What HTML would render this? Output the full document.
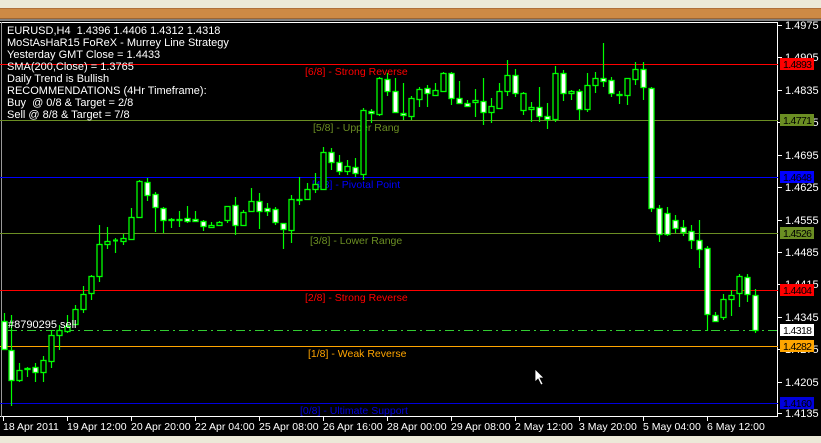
<!DOCTYPE html>
<html><head><meta charset="utf-8"><style>
html,body{margin:0;padding:0;width:821px;height:443px;overflow:hidden;background:#000;font-family:"Liberation Sans",sans-serif;}
#top{position:absolute;left:0;top:0;width:821px;height:8px;background:#ece9d8;}
#bar{position:absolute;left:0;top:8px;width:821px;height:9px;background:#cd8a45;border-top:1px solid #b0703a;border-bottom:1px solid #9a6535;}
#bar2{position:absolute;left:0;top:19px;width:821px;height:2px;background:#808080;}
#bot{position:absolute;left:0;top:436px;width:821px;height:7px;background:#ece9d8;}
.info{position:absolute;left:7px;color:#fff;font-size:11px;line-height:12px;white-space:pre;}
svg{position:absolute;left:0;top:0;}
</style></head><body>
<div id="top"></div><div id="bar"></div><div id="bar2"></div>
<svg id="s" width="821" height="443" xmlns="http://www.w3.org/2000/svg" font-family="Liberation Sans, sans-serif">
<rect x="0" y="21" width="821" height="415" fill="#000"/>
<line x1="0" y1="22.5" x2="778" y2="22.5" stroke="#fff"/>
<line x1="777.5" y1="22" x2="777.5" y2="417" stroke="#fff"/>
<line x1="0" y1="416.5" x2="778" y2="416.5" stroke="#fff"/>
<line x1="1.5" y1="22" x2="1.5" y2="417" stroke="#999"/>
<g id="lv"></g>
<g id="cd"></g>
<g id="ax"></g>
</svg>
<div class="info" style="top:25px">EURUSD,H4  1.4396 1.4406 1.4312 1.4318
MoStAsHaR15 FoReX - Murrey Line Strategy
Yesterday GMT Close = 1.4433
SMA(200,Close) = 1.3765
Daily Trend is Bullish
RECOMMENDATIONS (4Hr Timeframe):
Buy  @ 0/8 &amp; Target = 2/8
Sell @ 8/8 &amp; Target = 7/8</div>
<div id="bot"></div>
<script>
var NS="http://www.w3.org/2000/svg";
function el(p,t,a,txt){var e=document.createElementNS(NS,t);for(var k in a)e.setAttribute(k,a[k]);if(txt)e.textContent=txt;document.getElementById(p).appendChild(e);return e;}
var lv=[[64,"#ff0000","[6/8] - Strong Reverse",305,"1.4893"],[120,"#6b8e23","[5/8] - Upper Rang",313,"1.4771"],[177,"#0000ff","[4/8] - Pivotal Point",312,"1.4648"],[233,"#6b8e23","[3/8] - Lower Range",310,"1.4526"],[290,"#ff0000","[2/8] - Strong Reverse",305,"1.4404"],[346,"#ffa500","[1/8] - Weak Reverse",308,"1.4282"],[403,"#0000dd","[0/8] - Ultimate Support",300,"1.4160"]];
var pl=[[25,"1.4975"],[57,"1.4905"],[90,"1.4835"],[122,"1.4765"],[155,"1.4695"],[187,"1.4625"],[220,"1.4555"],[252,"1.4485"],[284,"1.4415"],[317,"1.4345"],[349,"1.4275"],[382,"1.4205"],[413,"1.4135"]];
pl.forEach(function(p){el("ax","line",{x1:778,y1:p[0]+.5,x2:782,y2:p[0]+.5,stroke:"#fff"});el("ax","text",{x:785,y:p[0]+4,fill:"#fff","font-size":"11"},p[1]);});
lv.forEach(function(l){var c=l[1];el("lv","line",{x1:0,y1:l[0]+.5,x2:778,y2:l[0]+.5,stroke:c});
el("lv","text",{x:l[3],y:l[0]+11,fill:c,"font-size":"10.5"},l[2]);
el("ax","rect",{x:780,y:l[0]-6,width:34,height:12,fill:c});
el("ax","text",{x:783,y:l[0]+4,fill:"#000","font-size":"10.5",textLength:"29"},l[4]);});
el("lv","line",{x1:8,y1:330.5,x2:778,y2:330.5,stroke:"#32cd32","stroke-dasharray":"9,4,2,4"});
el("ax","rect",{x:780,y:324,width:34,height:12,fill:"#fff"});
el("ax","text",{x:783,y:334,fill:"#000","font-size":"10.5",textLength:"29"},"1.4318");
el("ax","text",{x:8,y:328,fill:"#fff","font-size":"11"},"#8790295 sell");
var tl=["18 Apr 2011","19 Apr 12:00","20 Apr 20:00","22 Apr 04:00","25 Apr 08:00","26 Apr 16:00","28 Apr 00:00","29 Apr 08:00","2 May 12:00","3 May 20:00","5 May 04:00","6 May 12:00"];
tl.forEach(function(t,i){var x=3+64*i;el("ax","line",{x1:x+.5,y1:417,x2:x+.5,y2:421,stroke:"#fff"});el("ax","text",{x:x,y:430,fill:"#fff","font-size":"10.5"},t);});
var C=[[4,321,349,313,350,1],[11,350,380,315,406,1],[19,370,380,363,382,0],[27,368,369,367,377,0],[35,367,372,363,382,1],[43,360,372,356,382,0],[51,335,361,330,368,0],[59,330,335,325,350,0],[67,326,331,315,333,0],[75,309,324,305,324,0],[83,294,309,286,313,0],[91,276,293,275,300,0],[99,244,276,225,282,0],[107,241,244,227,249,0],[115,240,240,238,253,0],[123,238,241,234,245,0],[131,217,239,208,240,0],[139,181,217,180,217,0],[147,182,195,178,201,1],[155,194,207,192,232,1],[163,208,220,207,233,1],[171,219,220,218,228,0],[179,219,220,211,227,0],[187,218,221,206,223,1],[195,219,221,211,222,1],[203,221,226,220,231,1],[211,225,227,222,228,0],[219,222,225,221,226,0],[227,206,220,206,223,0],[235,205,225,197,235,1],[243,212,225,210,226,0],[251,201,211,188,212,0],[259,201,211,193,229,1],[267,208,211,203,216,1],[275,209,222,207,225,1],[283,223,229,223,249,1],[291,199,230,195,243,0],[299,199,200,177,205,0],[307,189,199,183,200,0],[315,184,189,173,193,0],[323,152,189,147,190,0],[331,152,162,148,170,1],[339,162,171,155,175,1],[347,166,171,160,175,0],[355,167,173,158,177,1],[363,110,174,108,180,0],[371,111,113,109,123,1],[379,78,114,77,116,0],[387,79,91,73,96,1],[395,91,112,78,113,1],[403,113,115,83,120,1],[411,98,116,96,120,0],[419,89,99,87,107,0],[427,88,93,85,107,1],[435,90,95,83,96,0],[443,73,91,72,92,0],[451,73,98,72,105,1],[459,98,103,81,104,1],[467,103,106,100,106,1],[475,100,102,89,117,0],[483,101,112,78,125,1],[491,106,112,98,123,0],[499,91,108,83,108,0],[507,75,91,60,96,0],[515,75,93,69,97,1],[523,93,110,92,115,0],[531,107,109,102,122,0],[539,107,116,87,122,1],[547,116,119,103,129,1],[555,73,119,66,122,0],[563,73,93,70,101,1],[571,91,93,90,100,0],[579,91,109,89,120,1],[587,85,109,73,112,0],[595,78,85,72,93,0],[603,78,81,43,87,1],[611,80,93,77,97,1],[619,94,95,91,104,0],[627,78,95,78,105,0],[635,69,79,62,85,0],[643,69,87,62,100,1],[651,88,208,87,212,1],[659,208,234,205,242,1],[667,213,234,207,236,1],[675,220,228,215,233,1],[683,227,232,220,236,1],[691,231,240,225,249,1],[699,240,249,220,268,1],[707,248,314,246,331,1],[715,315,321,312,321,1],[723,299,317,294,320,0],[731,295,299,290,316,0],[739,276,293,274,307,0],[747,277,294,274,302,1],[755,295,330,289,333,1]];
C.forEach(function(c){var g="#00ff00";el("cd","line",{x1:c[0]+.5,y1:c[3],x2:c[0]+.5,y2:c[4],stroke:g,"stroke-width":1.2});
var h=c[2]-c[1];if(h<1){el("cd","line",{x1:c[0]-2,y1:c[1]+.5,x2:c[0]+3,y2:c[1]+.5,stroke:g,"stroke-width":2});return;}
el("cd","rect",{x:c[0]-2,y:c[1]+.5,width:5,height:h,fill:c[5]?"#fff":"#000",stroke:g,"stroke-width":1.3});});
el("ax","path",{d:"M535 369 L535 382 L538 379 L541 385 L543 384 L540 378 L544 378 Z",fill:"#fff",stroke:"#000","stroke-width":"0.8"});
</script>
</body></html>
